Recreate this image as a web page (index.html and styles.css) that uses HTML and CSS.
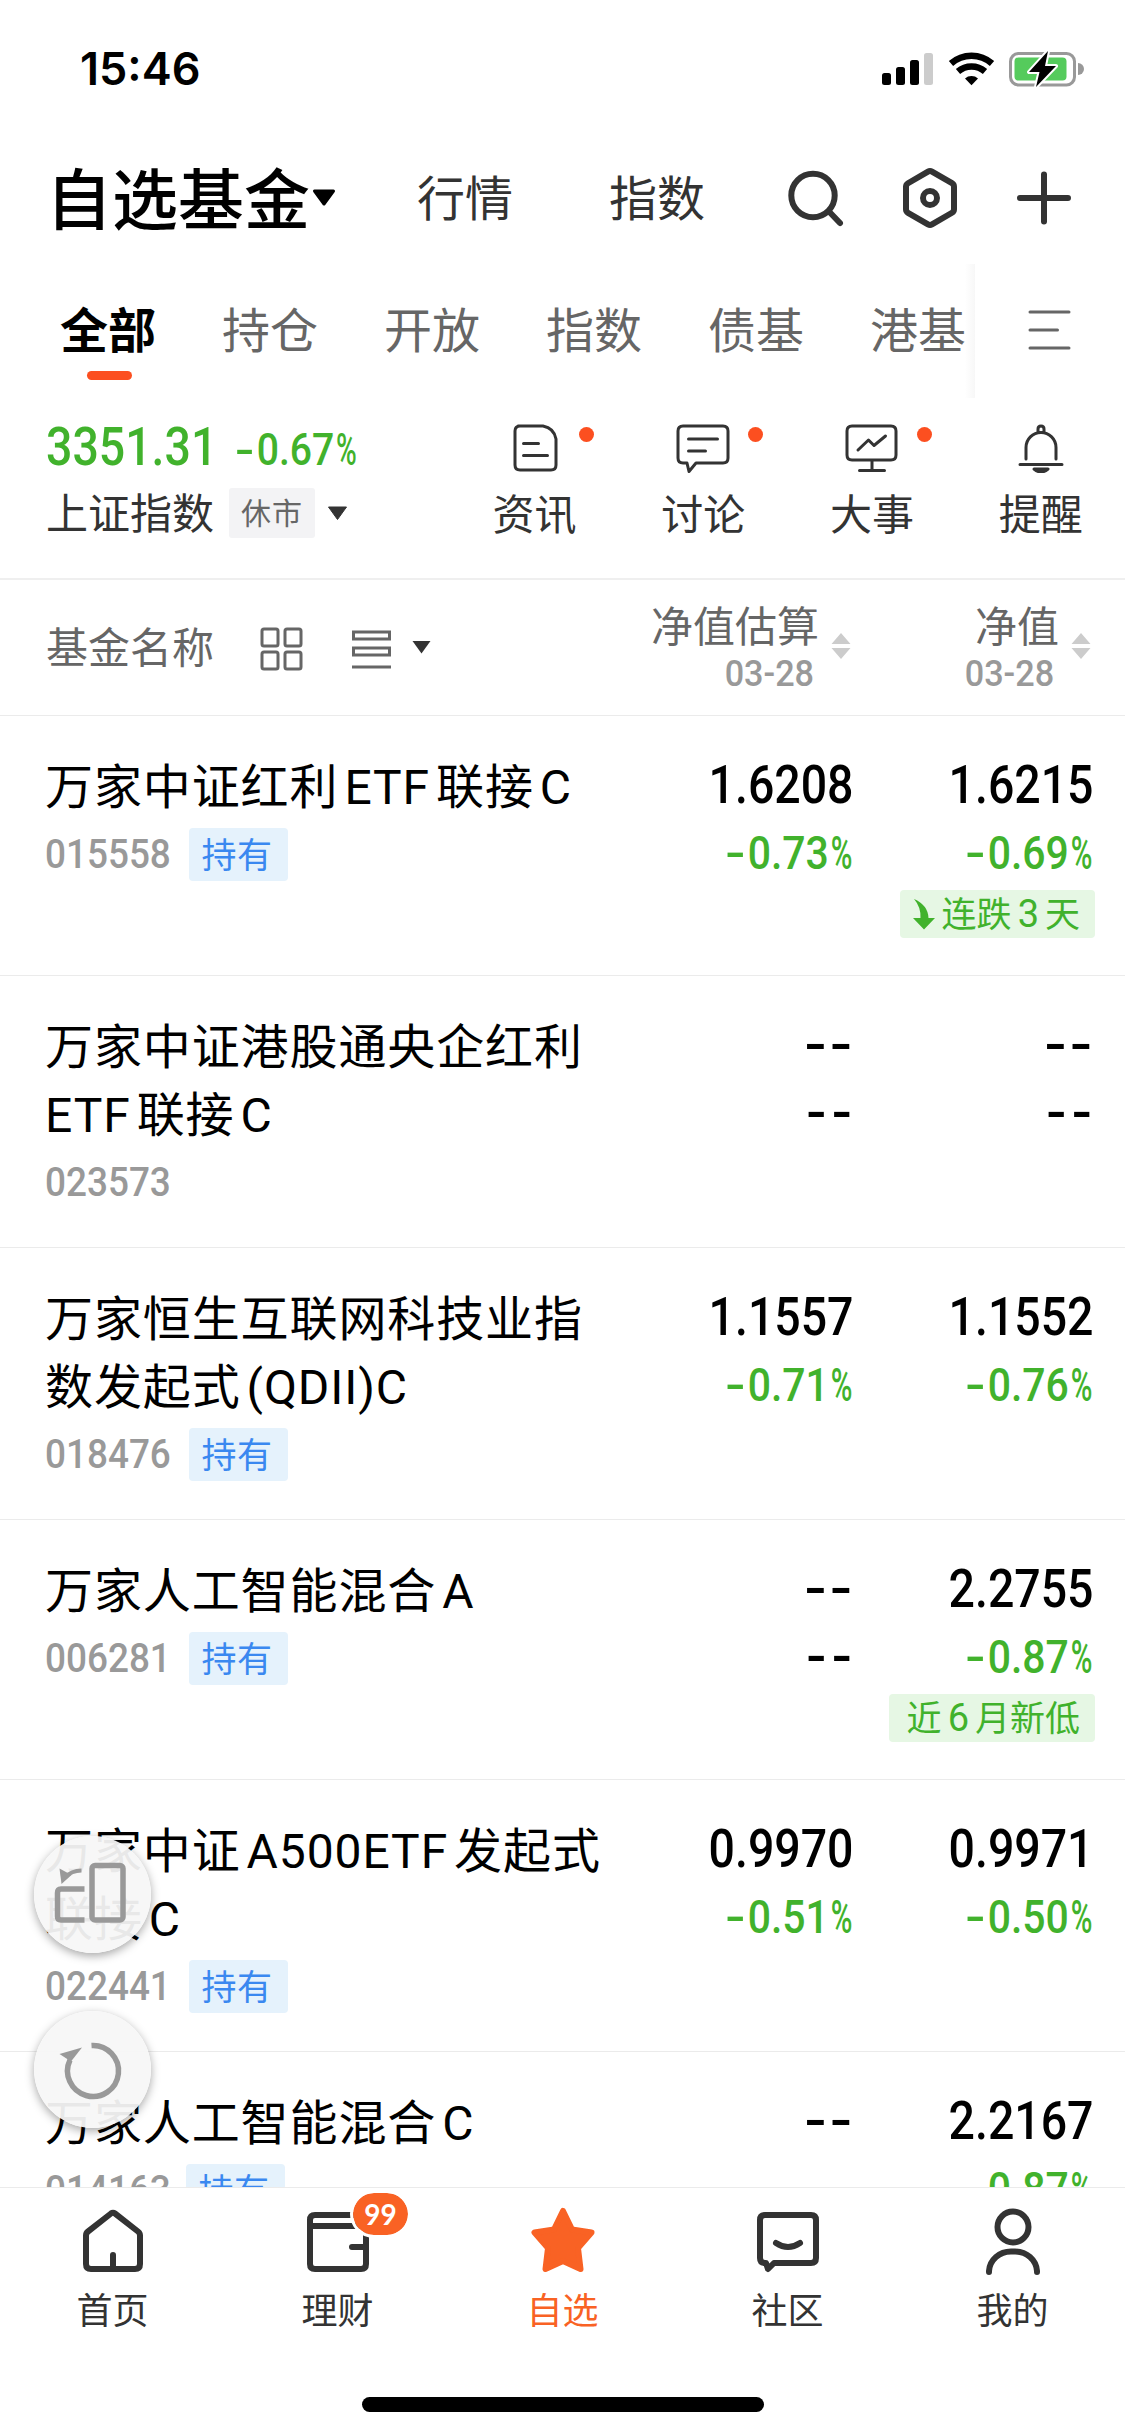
FILE: index.html
```html
<!DOCTYPE html>
<html lang="zh-CN">
<head>
    <meta charset="utf-8">
    <title>自选基金</title>
    <link rel="stylesheet" href="styles.css">
</head>
<body>
    <div class="statusbar">
        <span class="time">15:46</span>
        <svg class="status_icons" width="202" height="38" viewBox="0 0 202 38">
            <rect x="0" y="23" width="9" height="12" rx="2.5"/>
            <rect x="14" y="17" width="9" height="18" rx="2.5"/>
            <rect x="28" y="10" width="9" height="25" rx="2.5"/>
            <rect x="42" y="3" width="9" height="32" rx="2.5" fill="#ccc"/>
            <g fill="none" stroke="#000" stroke-width="6.5">
                <path d="M69 13.5a31 31 0 0 1 41 0"/>
                <path d="M76 21.5a20.500 20.500 0 0 1 27 0"/>
            </g>
            <path d="M83 28.500a10 10 0 0 1 13 0l-6.500 6.700z"/>
            <rect x="128.500" y="3.500" width="64" height="31.500" rx="8" fill="none" stroke="#999" stroke-width="3"/>
            <rect x="132.500" y="7.500" width="52" height="23" rx="4" fill="#55cb5c"/>
            <path d="M196 13a6 6 0 0 1 0 12z" fill="#999"/>
            <path d="M166 1l-19 21h10.500l-3.500 15 20-21h-11z" stroke="#fff" stroke-width="4" paint-order="stroke" stroke-linejoin="round"/>
        </svg>
    </div>

    <div class="titlebar">
        <h1>自选基金</h1>
        <svg class="title_arrow" width="24" height="18" viewBox="0 0 24 18"><path d="M2.500 2h19L12 15z" stroke="#000" stroke-width="3" stroke-linejoin="round"/></svg>
        <a class="t1">行情</a>
        <a class="t2">指数</a>
        <svg class="search" width="58" height="62" viewBox="0 0 58 62" fill="none" stroke="#333" stroke-width="6" stroke-linecap="round">
            <circle cx="26" cy="28.500" r="21.700"/><path d="M42 44.500L53 56"/>
        </svg>
        <svg class="hex" width="58" height="62" viewBox="0 0 58 62" fill="none" stroke="#333" stroke-width="6" stroke-linejoin="round">
            <path d="M27 4.600q2-1.200 4 0l20 11.600q2 1.200 2 3.500v22.600q0 2.300-2 3.500L31 57.400q-2 1.200-4 0L7 45.800q-2-1.200-2-3.500V19.700q0-2.300 2-3.500z"/><circle cx="29" cy="31" r="7"/>
        </svg>
        <svg class="plus" width="58" height="62" viewBox="0 0 58 62" stroke="#333" stroke-width="6" stroke-linecap="round"><path d="M29 7.500v47M5 31h48"/></svg>
    </div>

    <div class="tabs">
        <div class="tablist">
            <a class="on">全部</a><a>持仓</a><a>开放</a><a>指数</a><a>债基</a><a>港基</a>
        </div>
        <svg class="menu" width="44" height="42" viewBox="0 0 44 42" stroke="#666" stroke-width="3" stroke-linecap="round"><path d="M2 3h39M2 21h27.500M2 39h39"/></svg>
    </div>

    <div class="market">
        <div class="index">
            <div class="quote"><span class="num point">3351.31</span><span class="num change"><b>-</b>0.67<i>%</i></span></div>
            <div class="index_name"><span class="label">上证指数</span><span class="closed">休市</span><svg width="21" height="15" viewBox="0 0 21 15"><path d="M1.500 1h18l-9 12.500z" fill="#333" stroke="#333" stroke-linejoin="round"/></svg></div>
        </div>
        <div class="quick">
            <a class="new">
                <svg width="54" height="50" viewBox="0 0 54 50"><path d="M10 3h25q11 2 13 13v26q0 5-5 5H12q-5 0-5-5V8q0-5 5-5M15.500 20.500h15M15.500 32.500h24"/></svg>
                资讯
            </a>
            <a class="new">
                <svg width="54" height="50" viewBox="0 0 54 50"><path d="M7 3h40q5 0 5 5v27q0 5-5 5H20l-7 8.500-2-8.500H7q-5 0-5-5V8q0-5 5-5zM12.500 16h29M12.500 28h17"/></svg>
                讨论
            </a>
            <a class="new">
                <svg width="54" height="50" viewBox="0 0 54 50"><path d="M7 3h39q5 0 5 5v24q0 5-5 5H7q-5 0-5-5V8q0-5 5-5zM27 37v10M14.500 47.500h25M13 27l10.500-10 5.500 5.500 11.500-9.500"/></svg>
                大事
            </a>
            <a>
                <svg width="54" height="50" viewBox="0 0 54 50"><path d="M12 36V24.500a15 15 0 0 1 30 0V36M6 41.500h42M24 9V6q0-3 3-3t3 3v3"/><path d="M20 46q7 6 14 0z" fill="#333"/></svg>
                提醒
            </a>
        </div>
    </div>

    <div class="thead">
        <div class="col_name">
            <span class="label">基金名称</span>
            <svg class="grid" width="43" height="44" viewBox="0 0 43 44"><path d="M4 2h12q2 0 2 2v13q0 2-2 2H4q-2 0-2-2V4q0-2 2-2zM27 2h12q2 0 2 2v13q0 2-2 2H27q-2 0-2-2V4q0-2 2-2zM4 25h12q2 0 2 2v13q0 2-2 2H4q-2 0-2-2V27q0-2 2-2zM27 25h12q2 0 2 2v13q0 2-2 2H27q-2 0-2-2V27q0-2 2-2z"/></svg>
            <svg class="rows" width="39" height="44" viewBox="0 0 39 44"><path d="M1.500 6h36v7h-36zM1.500 22h36v7h-36zM0 41h39"/></svg>
            <svg class="caret" width="21" height="15" viewBox="0 0 21 15"><path d="M1.500 1h18l-9 12.500z"/></svg>
        </div>
        <div class="col_sort">
            <div>净值估算<span class="num date">03-28</span></div>
            <svg width="20" height="26" viewBox="0 0 20 26" fill="#ccc"><path d="M10 0l9.500 11H.5zM10 26l9.500-11H.5z"/></svg>
        </div>
        <div class="col_sort">
            <div>净值<span class="num date">03-28</span></div>
            <svg width="20" height="26" viewBox="0 0 20 26" fill="#ccc"><path d="M10 0l9.500 11H.5zM10 26l9.500-11H.5z"/></svg>
        </div>
    </div>

    <div class="funds">
        <div class="fund short">
            <div class="name">
                万家中证红利<span class="en">ETF</span>联接<span class="en">C</span>
                <div class="meta"><span class="num code">015558</span><span class="held">持有</span></div>
            </div>
            <div class="value"><span class="num nav">1.6208</span><span class="num pct"><b>-</b>0.73<i>%</i></span></div>
            <div class="value"><span class="num nav">1.6215</span><span class="num pct"><b>-</b>0.69<i>%</i></span>
                <span class="trend"><svg width="22" height="32" viewBox="0 0 22 32"><path d="M1 1Q15 7 15.500 20H22L11 31.500 0 20h7.500Q8 9 1 1z"/></svg>连跌<span class="en">3</span>天</span>
            </div>
        </div>
        <div class="fund">
            <div class="name">
                万家中证港股通央企红利<br><span class="en lead">ETF</span>联接<span class="en">C</span>
                <div class="meta"><span class="num code">023573</span></div>
            </div>
            <div class="value"><span class="none nav">--</span><span class="none pct">--</span></div>
            <div class="value"><span class="none nav">--</span><span class="none pct">--</span></div>
        </div>
        <div class="fund">
            <div class="name">
                万家恒生互联网科技业指<br>数发起式<span class="en">(QDII)C</span>
                <div class="meta"><span class="num code">018476</span><span class="held">持有</span></div>
            </div>
            <div class="value"><span class="num nav">1.1557</span><span class="num pct"><b>-</b>0.71<i>%</i></span></div>
            <div class="value"><span class="num nav">1.1552</span><span class="num pct"><b>-</b>0.76<i>%</i></span></div>
        </div>
        <div class="fund short">
            <div class="name">
                万家人工智能混合<span class="en">A</span>
                <div class="meta"><span class="num code">006281</span><span class="held">持有</span></div>
            </div>
            <div class="value"><span class="none nav">--</span><span class="none pct">--</span></div>
            <div class="value"><span class="num nav">2.2755</span><span class="num pct"><b>-</b>0.87<i>%</i></span>
                <span class="trend low">近<span class="en">6</span>月新低</span>
            </div>
        </div>
        <div class="fund">
            <div class="name">
                万家中证<span class="en">A500ETF</span>发起式<br>联接<span class="en">C</span>
                <div class="meta"><span class="num code">022441</span><span class="held">持有</span></div>
            </div>
            <div class="value"><span class="num nav">0.9970</span><span class="num pct"><b>-</b>0.51<i>%</i></span></div>
            <div class="value"><span class="num nav">0.9971</span><span class="num pct"><b>-</b>0.50<i>%</i></span></div>
        </div>
        <div class="fund short">
            <div class="name">
                万家人工智能混合<span class="en">C</span>
                <div class="meta"><span class="num code last">014163</span><span class="held">持有</span></div>
            </div>
            <div class="value"><span class="none nav">--</span></div>
            <div class="value"><span class="num nav">2.2167</span><span class="num pct"><b>-</b>0.87<i>%</i></span></div>
        </div>
    </div>

    <div class="tabbar">
        <a>
            <svg width="72" height="72" viewBox="0 0 72 72"><path d="M34 8.500q2-1.500 4 0l23 18q2 1.500 2 4V59q0 5-5 5H14q-5 0-5-5V30.500q0-2.500 2-4zM36 64V50"/></svg>
            首页
        </a>
        <a>
            <svg width="72" height="72" viewBox="0 0 72 72"><path d="M13 10h45q6 0 6 6v43q0 5-5 5H13q-5 0-5-5V15q0-5 5-5zM8 21h56M50 42h14"/></svg>
            <span class="badge">99</span>
            理财
        </a>
        <a class="on">
            <svg width="72" height="72" viewBox="0 0 72 72"><path d="M36 6l9 18.500 19.500 3L51 43l2.500 21L36 56l-17.500 8L21 43 7.500 27.500l19.500-3z" fill="#f96224"/></svg>
            自选
        </a>
        <a>
            <svg width="72" height="72" viewBox="0 0 72 72"><path d="M13 10h46q5 0 5 5v38q0 5-5 5H22l-6 6-2-6h-1q-5 0-5-5V15q0-5 5-5zM24 38q12 8 24 0"/></svg>
            社区
        </a>
        <a>
            <svg width="72" height="72" viewBox="0 0 72 72"><ellipse cx="36" cy="22" rx="15.500" ry="15.500"/><path d="M12 67V66A22 21 0 0 1 34 46.500h4A22 21 0 0 1 60 66v1"/></svg>
            我的
        </a>
    </div>
    <div class="home_line"></div>

    <div class="fab rotate">
        <svg width="117" height="117" viewBox="0 0 117 117"><rect x="58" y="29.500" width="31" height="54.500" rx="3"/><path d="M50.500 53H27q-3.500 0-3.500 4v23.500q0 3.500 3.500 3.500h23.500"/><path d="M47.500 34.500q-10 0-16.500 7" stroke-width="4"/><path d="M25.500 32.500l2 15.500 10-9z" class="head"/></svg>
    </div>
    <div class="fab reload">
        <svg width="117" height="117" viewBox="0 0 117 117"><path d="M57.500 34.500A25.500 25.500 0 1 1 36 49"/><path d="M25.500 43l22.500-6.500-11 14z" class="head"/></svg>
    </div>
</body>
</html>
```
FILE: styles.css
```css
body
{
    margin:0;
    width:1125px;
    height:2436px;
    position:relative;
    overflow:hidden;
    display:flex;
    flex-direction:column;
    background:#fff;
    color:#333;
    font-family:"Noto Sans CJK SC",sans-serif;
    font-weight:400;
}
svg
{
    display:block;
    flex:none;
}
.statusbar
{
    height:132px;
    display:flex;
    align-items:flex-start;
    justify-content:space-between;
    padding:0 41px 0 80px;
    box-sizing:border-box;
}
.time
{
    font:600 45px/54px Inter,sans-serif;
    color:#000;
    margin-top:42px;
}
.status_icons
{
    margin-top:50px;
}
.titlebar
{
    height:132px;
    display:flex;
    align-items:center;
    padding-left:46px;
    font-size:48px;
}
h1
{
    margin:-6px 0 0;
    font-size:66px;
    line-height:90px;
    font-weight:500;
    color:#000;
    width:266px;
    white-space:nowrap;
}
.t1
{
    margin:-6px 0 0 81px;
    width:192px;
}
.t2
{
    width:178px;
    margin-top:-6px;
}
.hex
{
    margin-left:56px;
}
.plus
{
    margin-left:56px;
}
.tabs
{
    height:134px;
    display:flex;
}
.tablist
{
    width:975px;
    box-sizing:border-box;
    padding-left:60px;
    display:flex;
    overflow:hidden;
    background:linear-gradient(to left,#f7f7f7,#fff 10px);
}
.tablist a
{
    flex:none;
    width:162px;
    font-size:48px;
    line-height:127px;
    color:#666;
}
.tablist a.on
{
    color:#000;
    font-weight:700;
}
.tablist a.on::after
{
    content:"";
    display:block;
    width:45px;
    height:9px;
    border-radius:5px;
    margin:-20px 0 0 27px;
    background:#fc4f20;
}
.menu
{
    margin:45px 0 0 53px;
}
.market
{
    height:180px;
    border-bottom:2px solid #efefef;
    display:flex;
}
.index
{
    width:451px;
    padding:17px 0 0 46px;
    box-sizing:border-box;
}
.num
{
    display:inline-block;
    font-family:Roboto,sans-serif;
    font-weight:500;
    transform:scaleX(.86);
    transform-origin:right;
    white-space:nowrap;
}
/* wide minus and narrow percent sign */
.num b
{
    display:inline-block;
    font-weight:500;
    transform:scaleX(1.45);
    margin-right:6px;
}
.num i
{
    display:inline-block;
    font-style:normal;
    transform:scaleX(.72);
    transform-origin:left;
    width:.54em;
    margin-left:2px;
}
.quote
{
    display:flex;
    align-items:baseline;
    height:64px;
    line-height:64px;
    color:#41b22c;
}
.quote .num
{
    transform-origin:left;
}
.point
{
    font-size:54px;
    width:192px;
}
.num.change
{
    font-size:44px;
    transform:scaleX(.89);
}
.index_name
{
    display:flex;
    align-items:center;
    height:66px;
    margin-top:1px;
    font-size:42px;
}
.label
{
    margin-top:-6px;
}
.closed
{
    margin:0 12px 0 15px;
    padding:0 12px;
    width:62px;
    height:50px;
    line-height:47px;
    font-size:30px;
    letter-spacing:1px;
    color:#666;
    background:#f3f3f5;
    border-radius:3px;
}
.quick
{
    display:flex;
    padding-top:25px;
}
.quick a
{
    position:relative;
    width:168.700px;
    display:flex;
    flex-direction:column;
    align-items:center;
    font-size:42px;
    line-height:60px;
}
.quick svg
{
    fill:none;
    stroke:#333;
    stroke-width:3;
    stroke-linecap:round;
    stroke-linejoin:round;
    margin-bottom:9px;
}
.quick .new::after
{
    content:"";
    position:absolute;
    left:129px;
    top:4px;
    width:15px;
    height:15px;
    border-radius:50%;
    background:#fc4f20;
}
.thead
{
    height:135px;
    border-bottom:1px solid #ebebeb;
    display:flex;
    color:#666;
    font-size:42px;
}
.col_name
{
    width:565px;
    padding-left:46px;
    display:flex;
    align-items:center;
}
.col_name svg
{
    fill:none;
    stroke:#666;
    stroke-width:3;
}
.grid
{
    margin-left:46px;
    margin-top:2px;
}
.rows
{
    margin-left:49px;
}
.col_name .caret
{
    margin-left:20px;
    fill:#333;
    stroke:none;
}
.col_sort
{
    width:240px;
    display:flex;
    align-items:center;
    justify-content:flex-end;
    text-align:right;
}
.col_sort svg
{
    margin:-3px 0 0 12px;
}
.col_sort div
{
    line-height:46px;
}
.date
{
    display:block;
    font-size:36px;
    line-height:48px;
    margin:3px 5px -3px 0;
    color:#999;
    transform:scaleX(.95);
}
.funds
{
    flex:1;
    min-height:0;
    overflow:hidden;
}
.fund
{
    height:272px;
    box-sizing:border-box;
    border-bottom:1px solid #ebebeb;
    padding:36px 0 0 45px;
    display:flex;
}
.short
{
    height:260px;
}
.name
{
    width:568px;
    margin-top:-3px;
    font-size:48px;
    line-height:68px;
    letter-spacing:.9px;
    color:#000;
}
.en
{
    font-family:Roboto,sans-serif;
    line-height:0;
    margin:0 6px;
}
.en.lead
{
    margin-left:0;
}
.meta
{
    display:flex;
    align-items:center;
    height:68px;
    margin-top:3px;
    letter-spacing:0;
}
.code
{
    width:144px;
    font-size:41px;
    color:#999;
    transform:scaleX(.9);
    transform-origin:left;
}
.code.last
{
    width:141px;
}
.held
{
    width:99px;
    height:53px;
    line-height:49px;
    font-size:35px;
    letter-spacing:.6px;
    text-indent:-3px;
    text-align:center;
    color:#3a88f0;
    background:#e5f2fc;
    border-radius:4px;
}
.value
{
    width:240px;
    display:flex;
    flex-direction:column;
    align-items:flex-end;
}
.nav
{
    font-size:54px;
    line-height:66px;
    height:68px;
    color:#000;
}
.pct
{
    font-size:46px;
    line-height:67px;
    height:70px;
    color:#41b22c;
}
.num.pct
{
    transform:scaleX(.89);
}
.none
{
    font-family:Roboto,sans-serif;
    font-weight:500;
    color:#000;
    transform:scaleX(1.2);
    transform-origin:right;
    letter-spacing:3px;
    margin-right:-3px;
}
.none.pct
{
    color:#000;
    font-weight:700;
    transform:scaleX(1.2);
}
.trend
{
    display:flex;
    align-items:center;
    height:48px;
    line-height:44px;
    padding:0 15px 4px 13px;
    box-sizing:border-box;
    margin-right:-2px;
    font-size:35px;
    color:#41b22c;
    background:#e6f7e4;
    border-radius:4px;
    white-space:nowrap;
}
.trend svg
{
    margin:4px 7px 0 0;
    fill:#41b22c;
}
.trend .en
{
    font-size:38px;
    margin:3px 6px 0;
}
.low
{
    padding:0 15px 4px 18px;
}
.tabbar
{
    height:209px;
    border-top:1px solid #ebebeb;
    display:flex;
}
.tabbar a
{
    position:relative;
    width:225px;
    padding-top:17px;
    display:flex;
    flex-direction:column;
    align-items:center;
    font-size:36px;
    line-height:54px;
}
.tabbar svg
{
    fill:none;
    stroke:#333;
    stroke-width:6;
    stroke-linecap:round;
    stroke-linejoin:round;
    margin-bottom:4px;
}
.tabbar .on
{
    color:#f96224;
}
.tabbar .on svg
{
    stroke:#f96224;
}
.badge
{
    position:absolute;
    left:125px;
    top:2px;
    width:55px;
    height:42px;
    border:3px solid #fff;
    border-radius:24px;
    background:#f96224;
    background-clip:padding-box;
    color:#fff;
    font:700 28px/42px Lato,sans-serif;
    text-align:center;
}
.home_line
{
    width:402px;
    height:15px;
    border-radius:8px;
    background:#000;
    margin:0 auto 24px 362px;
}
.fab
{
    position:absolute;
    left:34px;
    width:117px;
    height:117px;
    border-radius:50%;
    background:rgba(246,246,246,.94);
    box-shadow:0 3px 10px rgba(0,0,0,.35);
}
.rotate
{
    top:1836px;
}
.reload
{
    top:2011px;
}
.fab svg
{
    fill:none;
    stroke:#999;
    stroke-width:5.500;
}
.fab .head
{
    fill:#999;
    stroke:none;
}
```
